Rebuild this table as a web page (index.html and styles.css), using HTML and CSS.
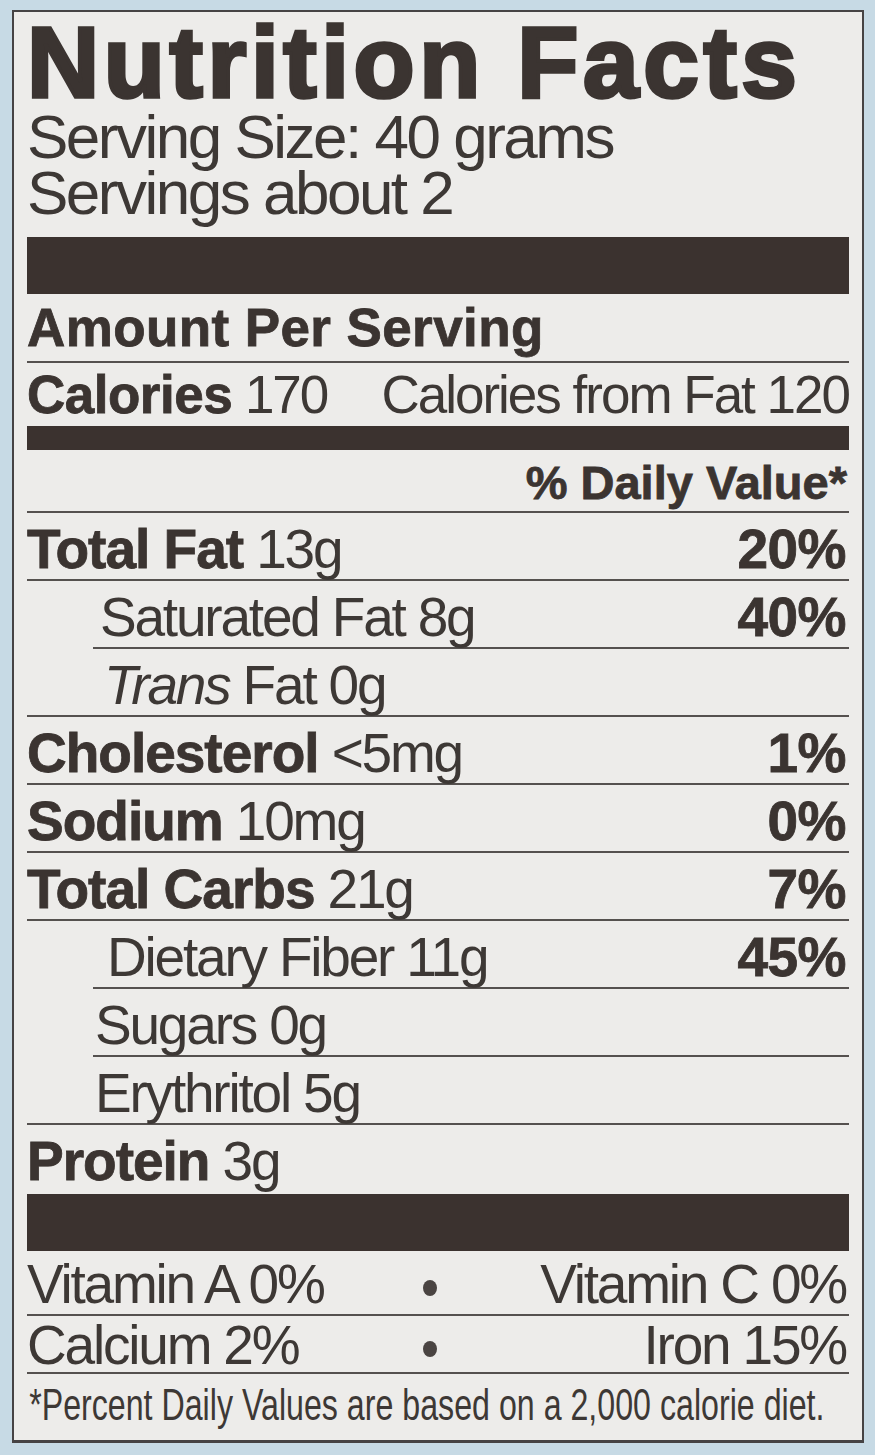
FILE: index.html
```html
<!DOCTYPE html>
<html lang="en">
<head>
<meta charset="utf-8">
<title>Nutrition Facts</title>
<link rel="stylesheet" href="styles.css">
</head>
<body>
<section class="label">
  <h1 class="title">Nutrition Facts</h1>
  <div class="serving">
    <p>Serving Size: 40 grams</p>
    <p>Servings about 2</p>
  </div>
  <div class="bar bar-thick"></div>
  <div class="amount">Amount Per Serving</div>
  <div class="calories"><span><b>Calories</b> 170</span><span>Calories from Fat 120</span></div>
  <div class="bar bar-medium"></div>
  <div class="dv-head">% Daily Value*</div>
  <ul class="nutrients">
    <li class="row"><span><b>Total Fat</b> 13g</span><b>20%</b></li>
    <li class="row sub sat"><span>Saturated Fat 8g</span><b>40%</b></li>
    <li class="row trans"><span><i>Trans</i> Fat 0g</span></li>
    <li class="row"><span><b>Cholesterol</b> &lt;5mg</span><b>1%</b></li>
    <li class="row"><span><b>Sodium</b> 10mg</span><b>0%</b></li>
    <li class="row"><span><b>Total Carbs</b> 21g</span><b>7%</b></li>
    <li class="row sub fiber"><span>Dietary Fiber 11g</span><b>45%</b></li>
    <li class="row sub sugars"><span>Sugars 0g</span></li>
    <li class="row erythritol"><span>Erythritol 5g</span></li>
    <li class="row protein"><span><b>Protein</b> 3g</span></li>
  </ul>
  <div class="bar bar-thick bar-last"></div>
  <div class="vitamins">
    <div class="vit-row first"><span>Vitamin A 0%</span><span class="sep"><span class="dot"></span></span><span class="right">Vitamin C 0%</span></div>
    <div class="vit-row second"><span>Calcium 2%</span><span class="sep"><span class="dot"></span></span><span class="right">Iron 15%</span></div>
  </div>
  <p class="footnote"><span class="footnote-text">*Percent Daily Values are based on a 2,000 calorie diet.</span></p>
</section>
</body>
</html>
```

FILE: styles.css
```css
* {
  box-sizing: border-box;
  margin: 0;
  padding: 0;
}

html,
body {
  background: #c7dae5;
}

body {
  padding: 10px 11px 14px 12px;
  font-family: "Liberation Sans", Arial, sans-serif;
  color: #3d3835;
}

b {
  font-weight: 700;
  letter-spacing: -1px;
  -webkit-text-stroke: 0.8px #3b3431;
  color: #3b3431;
}

.label {
  width: 852px;
  background: #edecea;
  border: 2px solid #464344;
  border-bottom-width: 3px;
  padding: 0 13px 9px;
}

.title {
  font-size: 100px;
  line-height: 94px;
  padding-top: 3px;
  font-weight: 700;
  letter-spacing: 4.6px;
  color: #3b3431;
  -webkit-text-stroke: 3.6px #3b3431;
  white-space: nowrap;
}

.serving {
  font-size: 62px;
  line-height: 56px;
  letter-spacing: -2.5px;
  white-space: nowrap;
}

.bar {
  background: #3b322f;
}

.bar-thick {
  height: 57px;
  margin-top: 16px;
}

.bar-last {
  margin-top: 0;
}

.bar-medium {
  height: 24px;
}

.amount {
  font-size: 53px;
  line-height: 67px;
  font-weight: 700;
  letter-spacing: 0.4px;
  -webkit-text-stroke: 0.8px #3b3431;
  color: #3b3431;
  border-bottom: 2px solid #55514f;
}

.calories {
  display: flex;
  justify-content: space-between;
  font-size: 53px;
  line-height: 63px;
  letter-spacing: -2px;
  white-space: nowrap;
}

.calories b {
  letter-spacing: -0.5px;
}

.dv-head {
  font-size: 47px;
  line-height: 57px;
  padding-top: 4px;
  font-weight: 700;
  text-align: right;
  -webkit-text-stroke: 0.8px #3b3431;
  color: #3b3431;
  border-bottom: 2px solid #55514f;
  padding-right: 2px;
}

.nutrients {
  list-style: none;
}

.row {
  display: flex;
  justify-content: space-between;
  font-size: 55px;
  line-height: 60px;
  padding-top: 6px;
  letter-spacing: -2.2px;
  white-space: nowrap;
  border-bottom: 2px solid #55514f;
}

.row > b {
  letter-spacing: -0.5px;
  padding-right: 3px;
}

.sub {
  margin-left: 66px;
}

.sat {
  padding-left: 7px;
}

.trans {
  padding-left: 77px;
}

.fiber {
  padding-left: 14px;
}

.sugars {
  padding-left: 2px;
}

.erythritol {
  padding-left: 68px;
}

.protein {
  border-bottom: none;
  padding-bottom: 3px;
}

.vit-row {
  display: grid;
  grid-template-columns: 1fr auto 1fr;
  font-size: 55px;
  letter-spacing: -2.2px;
  white-space: nowrap;
  border-bottom: 2px solid #55514f;
}

.vit-row.first {
  padding-top: 3px;
  line-height: 60px;
}

.vit-row.second {
  padding-top: 2px;
  line-height: 54px;
}

.vit-row .right {
  text-align: right;
  padding-right: 3px;
}

.sep {
  margin-right: 16px;
}

.dot {
  display: inline-block;
  width: 14px;
  height: 16px;
  border-radius: 50%;
  background: #4a4442;
  vertical-align: middle;
}

.footnote {
  font-size: 45px;
  line-height: 52px;
  padding-top: 5px;
  white-space: nowrap;
  overflow: hidden;
}

.footnote-text {
  display: inline-block;
  transform: scaleX(0.715);
  transform-origin: left center;
  padding-left: 3px;
}
```
